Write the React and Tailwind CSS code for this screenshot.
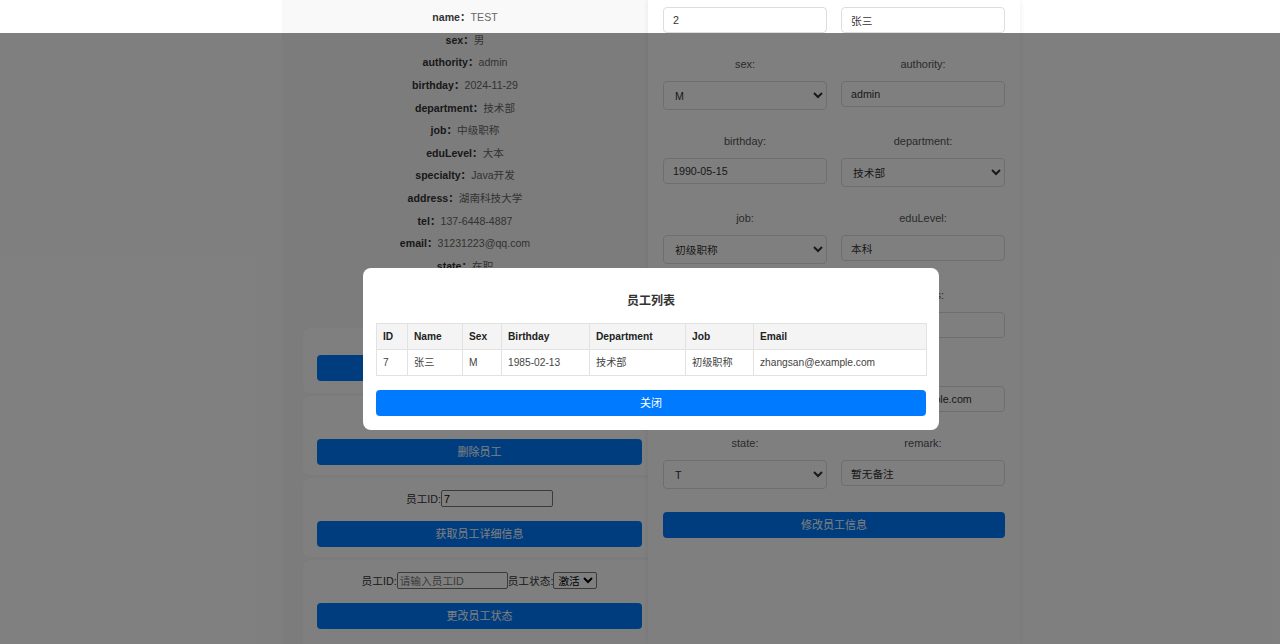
import React from "react";

const FONT = { fontFamily: '"Liberation Sans", "Noto Sans CJK SC", sans-serif' };

const details = [
  ["name", "TEST"],
  ["sex", "男"],
  ["authority", "admin"],
  ["birthday", "2024-11-29"],
  ["department", "技术部"],
  ["job", "中级职称"],
  ["eduLevel", "大本"],
  ["specialty", "Java开发"],
  ["address", "湖南科技大学"],
  ["tel", "137-6448-4887"],
  ["email", "31231223@qq.com"],
  ["state", "在职"],
];

function Btn({ children }) {
  return (
    <button className="w-full h-[26px] rounded-[4px] bg-[#007bff] text-white text-[11px] flex items-center justify-center">
      {children}
    </button>
  );
}

function SmallInput({ value, placeholder, w = "w-[112px]" }) {
  return (
    <input
      readOnly
      value={value}
      placeholder={placeholder}
      className={`${w} h-[17px] border border-[#767676] rounded-[2px] px-[2px] text-[10.7px] text-black placeholder:text-[#757575] bg-white outline-none`}
    />
  );
}

function Field({ label, children }) {
  return (
    <div className="flex flex-col">
      {label && (
        <div className="h-[16px] leading-[16px] mb-[9px] text-center text-[11px] text-[#555]">{label}</div>
      )}
      {children}
    </div>
  );
}

function TInput({ value }) {
  return (
    <input
      readOnly
      value={value}
      className="h-[26px] w-full border border-[#ddd] rounded-[4px] px-[9px] text-[10.7px] text-[#333] bg-white outline-none"
    />
  );
}

function TSelect({ value, options }) {
  return (
    <select
      value={value}
      onChange={() => {}}
      className="h-[29px] w-full border border-[#ddd] rounded-[4px] px-[7px] text-[10.7px] text-[#333] bg-white outline-none"
    >
      {options.map((o) => (
        <option key={o} value={o}>
          {o}
        </option>
      ))}
    </select>
  );
}

const cols = [
  ["ID", "w-[31px]"],
  ["Name", "w-[55px]"],
  ["Sex", "w-[39px]"],
  ["Birthday", "w-[88px]"],
  ["Department", "w-[96px]"],
  ["Job", "w-[68px]"],
  ["Email", "w-[173px]"],
];
const row = ["7", "张三", "M", "1985-02-13", "技术部", "初级职称", "zhangsan@example.com"];

export default function App() {
  return (
    <div className="relative h-[644px] w-[1280px] overflow-hidden bg-white" style={FONT}>
      <div className="flex ml-[282px] w-[738px] h-[644px]">
        {/* left column */}
        <div className="w-[366px] bg-[#f9f9f9] flex flex-col">
          <div className="pt-[6.6px] flex flex-col">
            {details.map(([k, v]) => (
              <div key={k} className="h-[22.65px] flex items-center justify-center text-[10.6px]">
                <span className="font-bold text-[#333]">{k}：</span>
                <span className="text-[#666]">{v}</span>
              </div>
            ))}
          </div>
          <div className="mt-[49.6px] ml-[21px] w-[353px] flex flex-col gap-[3px]">
            <div className="bg-white rounded-[6px] shadow-[0_0_2px_rgba(0,0,0,0.06)] px-[14px] pt-[27px] pb-[12px]">
              <Btn>获取员工列表</Btn>
            </div>
            <div className="bg-white rounded-[6px] shadow-[0_0_2px_rgba(0,0,0,0.06)] px-[14px] pt-[13px] pb-[10px]">
              <div className="h-[16px] mb-[14px] flex items-center justify-center text-[10.7px] text-[#333]">
                <span>员工ID:</span>
                <SmallInput placeholder="请输入员工ID" />
              </div>
              <Btn>删除员工</Btn>
            </div>
            <div className="bg-white rounded-[6px] shadow-[0_0_2px_rgba(0,0,0,0.06)] px-[14px] pt-[13px] pb-[10px]">
              <div className="h-[16px] mb-[14px] flex items-center justify-center text-[10.7px] text-[#333]">
                <span>员工ID:</span>
                <SmallInput value="7" />
              </div>
              <Btn>获取员工详细信息</Btn>
            </div>
            <div className="bg-white rounded-[6px] shadow-[0_0_2px_rgba(0,0,0,0.06)] px-[14px] pt-[13px] pb-[20px]">
              <div className="h-[16px] mb-[14px] flex items-center justify-center text-[10.7px] text-[#333]">
                <span>员工ID:</span>
                <SmallInput placeholder="请输入员工ID" w="w-[111px]" />
                <span>员工状态:</span>
                <select
                  value="激活"
                  onChange={() => {}}
                  className="h-[17px] border border-[#767676] rounded-[2px] px-0 text-[10.7px] text-black bg-white outline-none"
                >
                  <option value="激活">激活</option>
                  <option value="禁用">禁用</option>
                </select>
              </div>
              <Btn>更改员工状态</Btn>
            </div>
          </div>
        </div>

        {/* right column */}
        <div className="relative z-10 w-[372px] bg-white shadow-[0_0_6px_rgba(0,0,0,0.08)] px-[15px] pt-[7px]">
          <div className="grid grid-cols-2 gap-x-[14px] gap-y-[23px]">
            <Field><TInput value="2" /></Field>
            <Field><TInput value="张三" /></Field>
            <Field label="sex:"><TSelect value="M" options={["M", "F"]} /></Field>
            <Field label="authority:"><TInput value="admin" /></Field>
            <Field label="birthday:"><TInput value="1990-05-15" /></Field>
            <Field label="department:"><TSelect value="技术部" options={["技术部", "市场部"]} /></Field>
            <Field label="job:"><TSelect value="初级职称" options={["初级职称", "中级职称"]} /></Field>
            <Field label="eduLevel:"><TInput value="本科" /></Field>
            <Field label="specialty:"><TInput value="Java开发" /></Field>
            <Field label="address:"><TInput value="北京市朝阳区" /></Field>
            <Field label="tel:"><TInput value="13800138000" /></Field>
            <Field label="email:"><TInput value="zhangsan@example.com" /></Field>
            <Field label="state:"><TSelect value="T" options={["T", "F"]} /></Field>
            <Field label="remark:"><TInput value="暂无备注" /></Field>
          </div>
          <div className="mt-[23px]">
            <button className="w-full h-[26px] rounded-[4px] bg-[#007bff] text-white text-[11px]">修改员工信息</button>
          </div>
        </div>
      </div>

      {/* overlay */}
      <div className="absolute left-0 right-0 top-[33px] bottom-0 z-20 bg-black/50"></div>

      {/* modal */}
      <div className="absolute z-30 left-[363px] top-[268px] w-[576px] bg-white rounded-[8px] px-[13px] pt-[24px] pb-[14px]">
        <div className="h-[18px] leading-[18px] text-center text-[12px] font-bold text-[#333] mb-[13px]">员工列表</div>
        <table className="table-fixed w-[550px] border-collapse text-[10.2px]">
          <colgroup>
            {cols.map(([c, w]) => (
              <col key={c} className={w} />
            ))}
          </colgroup>
          <thead>
            <tr className="h-[26px] bg-[#f4f4f4]">
              {cols.map(([c]) => (
                <th key={c} className="border border-[#e2e2e2] text-left font-bold text-[#222] px-[6px]">
                  {c}
                </th>
              ))}
            </tr>
          </thead>
          <tbody>
            <tr className="h-[26px]">
              {row.map((v, i) => (
                <td key={i} className="border border-[#e2e2e2] text-left text-[#444] px-[6px]">
                  {v}
                </td>
              ))}
            </tr>
          </tbody>
        </table>
        <button className="mt-[14px] w-full h-[26px] rounded-[4px] bg-[#007bff] text-white text-[11px]">关闭</button>
      </div>
    </div>
  );
}
